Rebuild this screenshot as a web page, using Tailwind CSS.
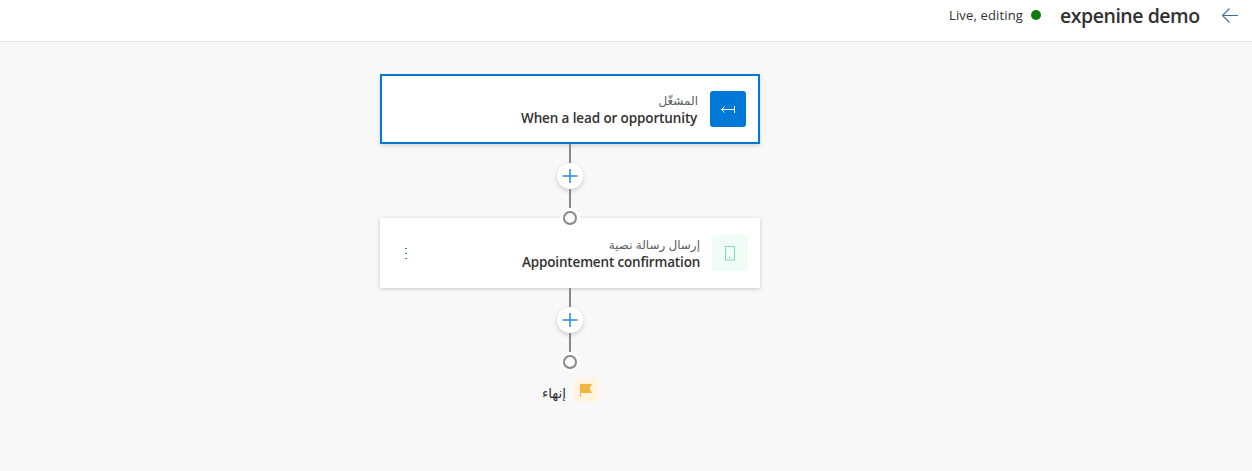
<!DOCTYPE html>
<html lang="ar">
<head>
<meta charset="utf-8">
<title>expenine demo</title>
<script src="https://cdn.jsdelivr.net/npm/@tailwindcss/browser@4"></script>
</head>
<body dir="rtl" class="h-[471px] overflow-hidden bg-[#f8f8f8] font-['Open_Sans','Noto_Sans','DejaVu_Sans',sans-serif] text-[#323130]">
<header class="flex h-[42px] items-start border-b border-[#e6e6e6] bg-white pr-[13px]">
  <svg class="mt-[7px] h-[16px] w-[18px]" viewBox="0 0 18 16" fill="none" stroke="#3a6ea5" stroke-width="1.1"><path d="M1.5 8.500H17M8.500 1.500l-7 7 7 7"/></svg>
  <h1 dir="ltr" class="mr-[21px] mt-[2px] w-[140px] whitespace-nowrap text-[19.5px] leading-[28px] font-semibold tracking-[-0.47px]">expenine demo</h1>
  <span class="mr-[19px] mt-[10px] size-[10px] rounded-full bg-[#107c10]"></span>
  <span dir="ltr" class="mr-[7px] mt-[5px] w-[75px] whitespace-nowrap text-[13px] leading-[20px] tracking-[0.15px]">Live, editing</span>
</header>
<main class="mr-[492px] flex w-[380px] flex-col items-center pt-[32px]">
  <section class="flex h-[70px] w-full items-center gap-[12px] border-2 border-[#0078d4] bg-white px-[12px] shadow-[0_2px_4px_rgba(0,0,0,0.14)]">
    <div class="flex size-[36px] items-center justify-center rounded-[3px] bg-[#0078d7]">
      <svg class="h-[9px] w-[16px]" viewBox="0 0 16 9" fill="none" stroke="#fff"><path d="M1.500 4.500H15M4.500 1.500l-3 3 3 3M14.500 1v7"/></svg>
    </div>
    <div class="flex flex-col pt-[2px]">
      <span class="text-[12px] leading-[16px] text-[#605e5c]">المشغّل</span>
      <span dir="ltr" class="w-[177px] whitespace-nowrap text-[13.5px] leading-[18px] font-semibold tracking-[-0.12px]">When a lead or opportunity</span>
    </div>
  </section>
  <div class="flex h-[74px] flex-col items-center">
    <div class="h-[19px] w-[2px] shrink-0 bg-[#8a8886]"></div>
    <div class="flex size-[26px] shrink-0 items-center justify-center rounded-full bg-white shadow-[0_2px_5px_rgba(0,0,0,0.18)]">
      <svg class="size-[16px]" viewBox="0 0 16 16" stroke="#2f86da" stroke-width="1.5"><path d="M8 1v14M.5 8h15"/></svg>
    </div>
    <div class="h-[19px] w-[2px] shrink-0 bg-[#8a8886]"></div>
    <div class="relative z-10 flex size-[20px] shrink-0 items-center justify-center rounded-full bg-white">
      <div class="size-[14px] rounded-full border-2 border-[#8a8886]"></div>
    </div>
  </div>
  <section class="flex h-[70px] w-full items-center gap-[12px] bg-white px-[12px] shadow-[0_1px_4px_rgba(0,0,0,0.2)]">
    <div class="flex size-[36px] items-center justify-center rounded-[3px] bg-[#effdf6]">
      <svg class="h-[15px] w-[10px]" viewBox="0 0 10 15" fill="none" stroke="#7fdcb4"><path d="M.5 .5h9v13.500h-9zM4 11.500h2"/></svg>
    </div>
    <div class="flex flex-col pt-[2px]">
      <span class="text-[12px] leading-[16px] tracking-[-0.2px] text-[#605e5c]">إرسال رسالة نصية</span>
      <span dir="ltr" class="w-[178px] whitespace-nowrap text-[13.5px] leading-[18px] font-semibold tracking-[-0.16px]">Appointement confirmation</span>
    </div>
    <svg class="mr-auto ml-[13px] h-[11px] w-[2px]" viewBox="0 0 2 11" fill="#2b88c4"><path d="M0 0h2v1H0zM0 5h2v1H0zM0 10h2v1H0z"/></svg>
  </section>
  <div class="flex h-[74px] flex-col items-center">
    <div class="h-[19px] w-[2px] shrink-0 bg-[#8a8886]"></div>
    <div class="flex size-[26px] shrink-0 items-center justify-center rounded-full bg-white shadow-[0_2px_5px_rgba(0,0,0,0.18)]">
      <svg class="size-[16px]" viewBox="0 0 16 16" stroke="#2f86da" stroke-width="1.5"><path d="M8 1v14M.5 8h15"/></svg>
    </div>
    <div class="h-[19px] w-[2px] shrink-0 bg-[#8a8886]"></div>
    <div class="relative z-10 flex size-[20px] shrink-0 items-center justify-center rounded-full bg-white">
      <div class="size-[14px] rounded-full border-2 border-[#8a8886]"></div>
    </div>
  </div>
  <div class="mt-[16px] flex items-start gap-[8px]">
    <div class="flex size-[24px] items-center justify-center rounded-[2px] bg-[#fff4df]">
      <svg class="h-[13px] w-[12px]" viewBox="0 0 12 13" fill="#f2b544"><path d="M0 0h12L9.500 4.500 12 9H1v4H0z"/></svg>
    </div>
    <span class="mt-[5px] text-[13.5px] leading-[20px]">إنهاء</span>
  </div>
</main>
</body>
</html>
